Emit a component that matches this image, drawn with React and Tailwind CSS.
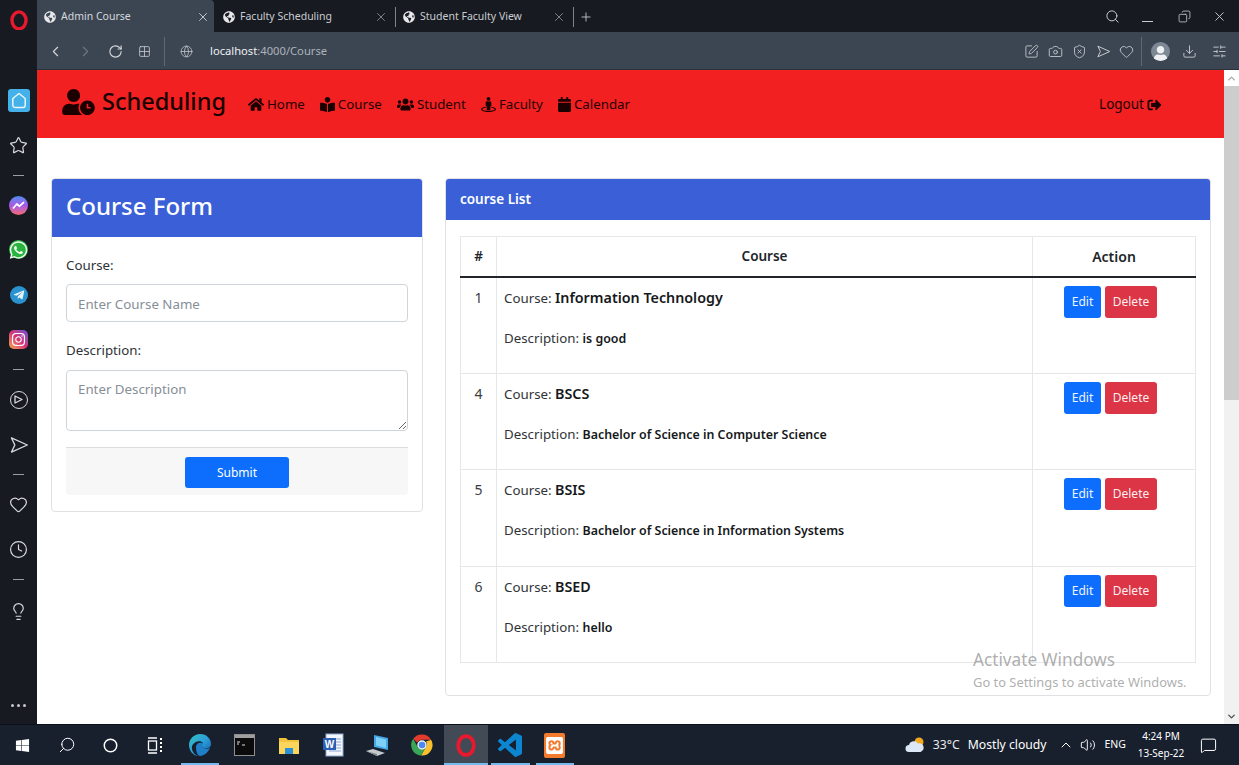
import React from 'react';
import { ChevronLeft, ChevronRight, RotateCw, Globe, Search, Copy, X, Plus, Camera, ShieldX, Heart, Download, SlidersHorizontal, Star, Clock, Lightbulb, ChevronUp, ChevronDown, Volume2, MessageSquare, Circle, SquarePen, Grid2x2 } from 'lucide-react';
import { FaHome, FaBookReader, FaUsers, FaStreetView, FaCalendar, FaSignOutAlt, FaUserClock, FaGlobeAmericas, FaWhatsapp, FaTelegramPlane, FaInstagram, FaWindows, FaUser } from 'react-icons/fa';
import { SiXampp } from 'react-icons/si';

const font = "font-['Noto_Sans',sans-serif]";

function Send2({ size = 18, className = '' }) {
  return (
    <svg width={size} height={size} viewBox="0 0 24 24" fill="none" stroke="currentColor" strokeWidth="1.6" strokeLinejoin="round" className={className}>
      <path d="M3 3.5 L22 12 L3 20.5 L7 12 Z" />
    </svg>
  );
}

function OperaLogo({ size = 20 }) {
  return (
    <svg width={size} height={size * 1.15} viewBox="0 0 24 28">
      <ellipse cx="12" cy="14" rx="9.5" ry="11.5" fill="none" stroke="#e8192c" strokeWidth="4.6" />
    </svg>
  );
}

function NavItem({ icon: Icon, label, iconClass }) {
  return (
    <a className="flex items-center gap-[3px] text-[13.3px] text-[#260304]">
      <Icon className={`${iconClass} h-[15px] text-[#1a0000]`} />
      <span>{label}</span>
    </a>
  );
}

function SideItem({ h = 'h-[45px]', children }) {
  return <div className={`flex w-full items-center justify-center ${h}`}>{children}</div>;
}

function Dash() {
  return <span className="h-px w-[11px] bg-[#9a9ea4]" />;
}

function Sidebar() {
  const ic = 'h-[19px] w-[19px] text-[#d8dadd]';
  return (
    <aside className="flex w-[37px] shrink-0 flex-col items-center bg-[#171a20]">
      <div className="flex h-[40px] items-center justify-center"><OperaLogo size={18} /></div>
      <div className="mt-[49px] flex h-[23px] w-[22px] items-center justify-center rounded-[3px] bg-[#45b1ea]">
        <svg width="16" height="17" viewBox="0 0 16 17" fill="none" stroke="#e8f6fd" strokeWidth="1.5"><path d="M8 1.5 L14.2 6.5 V13 A2.5 2.5 0 0 1 11.7 15.5 H4.3 A2.5 2.5 0 0 1 1.8 13 V6.5 Z" strokeLinejoin="round" /></svg>
      </div>
      <div className="mt-[22px] flex h-[22px] items-center"><Star className={ic} strokeWidth={1.5} /></div>
      <div className="mt-[19px] flex h-[1px] items-center"><Dash /></div>
      <SideItem h="mt-[7px] h-[44px]">
        <span className="flex h-[19px] w-[19px] items-center justify-center rounded-full bg-gradient-to-b from-[#3d8bf2] via-[#a855e8] to-[#f7656a]">
          <svg width="13" height="9" viewBox="0 0 13 9" fill="none" stroke="#fff" strokeWidth="1.8"><path d="M1 7.5 L4.8 3 L7.5 5.2 L12 1.2" strokeLinejoin="round" /></svg>
        </span>
      </SideItem>
      <SideItem><span className="flex h-[19px] w-[19px] items-center justify-center rounded-full bg-[#29b33f]"><FaWhatsapp className="h-[20px] w-[20px] text-[#f2f8f1]" /></span></SideItem>
      <SideItem><span className="flex h-[18px] w-[18px] items-center justify-center rounded-full bg-[#2a93cf]"><FaTelegramPlane className="h-[12px] w-[12px] text-[#e7f3fa]" /></span></SideItem>
      <SideItem><span className="flex h-[19px] w-[19px] items-center justify-center rounded-[5px] bg-gradient-to-tr from-[#f7a13a] via-[#d72f78] to-[#6a45d2]"><FaInstagram className="h-[15px] w-[15px] text-white" /></span></SideItem>
      <div className="mt-[7px] flex h-px items-center"><Dash /></div>
      <SideItem h="mt-[7px] h-[45px]">
        <span className="flex h-[18px] w-[18px] items-center justify-center rounded-full border-[1.5px] border-[#d8dadd]">
          <svg width="9" height="9" viewBox="0 0 9 9" fill="none" stroke="#d8dadd" strokeWidth="1.3"><path d="M1 1 L8 4.5 L1 8 Z" strokeLinejoin="round" /></svg>
        </span>
      </SideItem>
      <SideItem h="h-[45px]"><Send2 size={20} className="text-[#d8dadd]" /></SideItem>
      <div className="mt-[7px] flex h-px items-center"><Dash /></div>
      <SideItem h="mt-[7px] h-[45px]"><Heart className={ic} strokeWidth={1.5} /></SideItem>
      <SideItem h="h-[45px]"><Clock className={ic} strokeWidth={1.5} /></SideItem>
      <div className="mt-[7px] flex h-px items-center"><Dash /></div>
      <SideItem h="mt-[9px] h-[45px]"><Lightbulb className={ic} strokeWidth={1.5} /></SideItem>
      <div className="mb-[17px] mt-auto flex gap-[3px]">
        <span className="h-[3px] w-[3px] rounded-full bg-[#c8cacd]" />
        <span className="h-[3px] w-[3px] rounded-full bg-[#c8cacd]" />
        <span className="h-[3px] w-[3px] rounded-full bg-[#c8cacd]" />
      </div>
    </aside>
  );
}

function BrowserChrome() {
  const tool = 'h-[15px] w-[15px] text-[#c6cacf]';
  const tabText = 'ml-[5px] flex-1 truncate text-[10.5px]';
  return (
    <>
      <div className="flex h-[32px] items-stretch bg-[#171a20]">
        <div className="flex h-full w-[177px] items-center rounded-tr-sm bg-[#3c4653] pt-[1px]">
          <FaGlobeAmericas className="ml-[7px] h-[12px] w-[12px] shrink-0 text-[#e6e8eb]" />
          <span className={`${tabText} text-[#d5d8dc]`}>Admin Course</span>
          <X className="h-[14px] w-[14px] shrink-0 text-[#d5d8dc]" strokeWidth={1.5} />
          <span className="ml-[4px]" />
        </div>
        <div className="ml-[10px] flex h-full w-[172px] items-center pt-[1px]">
          <FaGlobeAmericas className="ml-[-1px] h-[12px] w-[12px] shrink-0 text-[#e6e8eb]" />
          <span className={`${tabText} text-[#c9ccd0]`}>Faculty Scheduling</span>
          <X className="h-[14px] w-[14px] text-[#8b9097]" strokeWidth={1.5} />
          <span className="ml-[7px] h-[20px] w-px bg-[#80858c]" />
        </div>
        <div className="flex h-full w-[197px] items-center pt-[1px]">
          <FaGlobeAmericas className="ml-[7px] h-[12px] w-[12px] shrink-0 text-[#e6e8eb]" />
          <span className={`${tabText} text-[#c9ccd0]`}>Student Faculty View</span>
          <X className="h-[14px] w-[14px] text-[#8b9097]" strokeWidth={1.5} />
          <span className="ml-[7px] h-[20px] w-px bg-[#80858c]" />
          <Plus className="ml-[5px] h-[14px] w-[14px] shrink-0 text-[#c9ccd0]" strokeWidth={1.5} />
        </div>
        <div className="ml-auto flex items-center pr-[12px] text-[#c9ccd0]">
          <Search className="h-[15px] w-[15px]" strokeWidth={1.6} />
          <span className="ml-[22px] mt-[11px] h-[1.5px] w-[11px] bg-[#c9ccd0]" />
          <Copy className="ml-[25px] h-[13px] w-[13px] -scale-x-100" strokeWidth={1.5} />
          <X className="ml-[21px] h-[15px] w-[15px]" strokeWidth={1.5} />
        </div>
      </div>
      <div className="flex h-[38px] shrink-0 items-center border-b border-[#2c323a] bg-[#3c4653] pt-[1px]">
        <ChevronLeft className="ml-[10px] h-[17px] w-[17px] text-[#d3d6da]" strokeWidth={1.6} />
        <ChevronRight className="ml-[13px] h-[17px] w-[17px] text-[#6f7680]" strokeWidth={1.6} />
        <RotateCw className="ml-[14px] h-[15px] w-[15px] text-[#d3d6da]" strokeWidth={1.8} />
        <Grid2x2 className="ml-[15px] h-[13px] w-[13px] text-[#c6cacf]" strokeWidth={1.5} />
        <span className="ml-[13px] h-[29px] w-px bg-[#5f6772]" />
        <Globe className="ml-[15px] h-[13px] w-[13px] text-[#c6cacf]" strokeWidth={1.4} />
        <span className="ml-[17px] text-[11.2px] text-[#eef0f2]">localhost<span className="text-[#aeb3ba]">:4000/Course</span></span>
        <div className="ml-auto flex items-center pr-[12px]">
          <SquarePen className={tool} strokeWidth={1.4} />
          <Camera className={`${tool} ml-[9px]`} strokeWidth={1.4} />
          <ShieldX className={`${tool} ml-[9px]`} strokeWidth={1.4} />
          <Send2 size={15} className="ml-[9px] text-[#c6cacf]" />
          <Heart className={`${tool} ml-[8px]`} strokeWidth={1.4} />
          <span className="ml-[7px] h-[29px] w-px bg-[#5f6772]" />
          <span className="ml-[9px] flex h-[19px] w-[19px] items-end justify-center overflow-hidden rounded-full bg-[#7d8894]"><FaUser className="h-[15px] w-[15px] text-[#eef0f2]" /></span>
          <Download className={`${tool} ml-[12px]`} strokeWidth={1.5} />
          <SlidersHorizontal className={`${tool} ml-[15px]`} strokeWidth={1.5} />
        </div>
      </div>
    </>
  );
}

function Navbar() {
  return (
    <nav className="flex h-[68px] shrink-0 items-center bg-[#f22020] pl-[25px] pr-[62px] pt-[1px] text-[#260304]">
      <FaUserClock className="h-[26px] w-[33px] -translate-y-[3px] text-[#1c0000]" />
      <span className="ml-[7px] -translate-y-[3px] text-[23.5px] font-medium leading-none text-[#170000]">Scheduling</span>
      <div className="ml-[22px] flex items-center gap-[15px]">
        <NavItem icon={FaHome} label="Home" iconClass="w-[16px]" />
        <NavItem icon={FaBookReader} label="Course" iconClass="w-[15px]" />
        <NavItem icon={FaUsers} label="Student" iconClass="w-[17px]" />
        <NavItem icon={FaStreetView} label="Faculty" iconClass="w-[15px]" />
        <NavItem icon={FaCalendar} label="Calendar" iconClass="w-[13px]" />
      </div>
      <a className="ml-auto flex items-center text-[13.5px]">Logout<FaSignOutAlt className="ml-[3px] h-[14px] w-[15px] text-[#1a0000]" /></a>
    </nav>
  );
}

function CourseForm() {
  return (
    <section className="h-[334px] w-[372px] shrink-0 overflow-hidden rounded-[4px] border border-[#dfe1e5] bg-white">
      <header className="flex h-[58px] items-center bg-[#3a5fd6] px-[14px] pb-[4px] text-[24px] font-medium text-white">Course Form</header>
      <div className="px-[14px] pt-[17px]">
        <label className="block text-[13.3px] leading-[22px] text-[#2f3337]">Course:</label>
        <input placeholder="Enter Course Name" className="mt-[8px] block h-[38px] w-full rounded-[4px] border border-[#ced4da] px-[11px] pt-[2px] text-[13.3px] placeholder:text-[#868e96]" />
        <label className="mt-[17px] block text-[13.3px] leading-[22px] text-[#2f3337]">Description:</label>
        <textarea placeholder="Enter Description" className="mt-[9px] block h-[61px] w-full rounded-[4px] border border-[#ced4da] px-[11px] pb-[7px] pt-[9px] text-[13.3px] placeholder:text-[#868e96]" />
        <div className="mt-[16px] flex h-[48px] items-center justify-center rounded-b-[4px] border-t border-[#dcdcdc] bg-[#f7f7f7] pt-[1px]">
          <button className="h-[31px] w-[104px] rounded-[3px] bg-[#0d6efd] pt-[1px] text-[12px] text-white">Submit</button>
        </div>
      </div>
    </section>
  );
}

const rows = [
  { id: 1, course: 'Information Technology', desc: 'is good' },
  { id: 4, course: 'BSCS', desc: 'Bachelor of Science in Computer Science' },
  { id: 5, course: 'BSIS', desc: 'Bachelor of Science in Information Systems' },
  { id: 6, course: 'BSED', desc: 'hello' },
];

function CourseList() {
  return (
    <section className="h-[518px] w-[766px] shrink-0 overflow-hidden rounded-[4px] border border-[#dfe1e5] bg-white">
      <header className="flex h-[41px] items-center bg-[#3a5fd6] px-[14px] text-[13.5px] font-semibold text-white">course List</header>
      <div className="px-[14px] pt-[16px]">
        <table className="w-full table-fixed border-collapse border border-[#e6e7ea]">
          <thead>
            <tr className="h-[40px] border-b-2 border-[#212529] text-[13.5px] font-semibold text-[#212529]">
              <th className="w-[36px] border-x border-[#e6e7ea] font-semibold">#</th>
              <th className="w-[536px] border-x border-[#e6e7ea] font-semibold">Course</th>
              <th className="border-x border-[#e6e7ea] text-[14px] font-semibold">Action</th>
            </tr>
          </thead>
          <tbody>
            {rows.map((r) => (
              <tr key={r.id} className="h-[96.5px] border-b border-[#e6e7ea] align-top">
                <td className="border-x border-[#e6e7ea] pt-[9px] text-center text-[14px] text-[#3a3e42]">{r.id}</td>
                <td className="border-x border-[#e6e7ea] px-[7px] pt-[9px] text-[#2f3337]">
                  <p className="text-[13.3px] leading-[22px]">Course: <b className="text-[14.3px] font-semibold text-[#16181a]">{r.course}</b></p>
                  <p className="mt-[18px] text-[13.3px] leading-[22px]">Description: <b className="text-[12.4px] font-semibold text-[#16181a]">{r.desc}</b></p>
                </td>
                <td className="border-x border-[#e6e7ea] pl-[31px] pt-[8px]">
                  <div className="flex gap-[4px]">
                    <button className="h-[32px] w-[37px] rounded-[3px] bg-[#0d6efd] text-[12px] text-[#eef5ff]">Edit</button>
                    <button className="h-[32px] w-[52px] rounded-[3px] bg-[#dc3545] text-[12px] text-[#fbeef0]">Delete</button>
                  </div>
                </td>
              </tr>
            ))}
          </tbody>
        </table>
      </div>
    </section>
  );
}

function Scrollbar() {
  return (
    <div className="flex w-[15px] shrink-0 flex-col bg-[#f1f1f1]">
      <div className="flex h-[16px] items-center justify-center bg-white"><ChevronUp className="h-[11px] w-[11px] text-[#a8a8a8]" strokeWidth={3} /></div>
      <div className="h-[314px] bg-[#cdcdcd]" />
      <div className="mt-auto flex h-[16px] items-center justify-center"><ChevronDown className="h-[11px] w-[11px] text-[#505050]" strokeWidth={3} /></div>
    </div>
  );
}

function Slot({ children, active, bar }) {
  return (
    <div className={`relative flex h-full w-[44.4px] items-center justify-center ${active ? 'bg-[#424a56]' : ''}`}>
      {children}
      {bar && <span className="absolute bottom-0 left-[3px] right-[3px] h-[2px] bg-[#76b9ed]" />}
      {active && <span className="absolute bottom-0 left-0 right-0 h-[2px] bg-[#76b9ed]" />}
    </div>
  );
}

function Taskbar() {
  return (
    <footer className="flex h-[41px] shrink-0 items-center border-t border-[#0c1018] bg-[#18202e] text-white">
      <Slot><FaWindows className="h-[15px] w-[15px]" /></Slot>
      <Slot><Search className="h-[18px] w-[18px] -scale-x-100" strokeWidth={1.3} /></Slot>
      <Slot><Circle className="h-[15px] w-[15px]" strokeWidth={2.4} /></Slot>
      <Slot>
        <svg width="16" height="17" viewBox="0 0 16 17" fill="none" stroke="#fff" strokeWidth="1.3"><path d="M1 1 H10 M1 16 H10" /><rect x="1.5" y="4" width="8" height="9" /><path d="M13 2 H15 M13 6 H15 M13 10 H15 M13 14 H15" strokeWidth="2" /></svg>
      </Slot>
      <Slot bar>
        <svg width="24" height="24" viewBox="0 0 24 24"><defs><linearGradient id="ed" x1="0" y1="0" x2="1" y2="1"><stop offset="0" stopColor="#35c1c1" /><stop offset="0.5" stopColor="#2b9fd9" /><stop offset="1" stopColor="#0d5aa7" /></linearGradient></defs><path d="M12 1 C19 1 23 6 23 11 C23 15 19 16 16 15 C13 14 14 11 15 10 C13 7 6 8 4 13 C3 18 7 23 12 23 C6 24 1 18 1 12 C1 6 6 1 12 1Z" fill="url(#ed)" /><path d="M8 14 C8 10 12 9 15 10 C14 11 13 14 16 15 C18 16 20 16 22 15 C20 20 15 23 12 23 C9 22 8 18 8 14Z" fill="#1f7fc9" /></svg>
      </Slot>
      <Slot>
        <svg width="21" height="22" viewBox="0 0 21 22"><rect x="0.5" y="0.5" width="20" height="21" fill="#0b0b0b" stroke="#8f8f8f" /><rect x="1" y="1" width="19" height="3" fill="#9f9f9f" /><path d="M3 8 H6 M3 10 H5 M8 11 H11" stroke="#e0e0e0" strokeWidth="1.2" /></svg>
      </Slot>
      <Slot>
        <svg width="20" height="20" viewBox="0 0 20 20"><path d="M0 3 H7 L9 5 H20 V19 H0 Z" fill="#f3c33e" /><rect x="0" y="7" width="20" height="12" fill="#fbd55c" /><rect x="6" y="13" width="8" height="6" fill="#2d8fd6" /></svg>
      </Slot>
      <Slot>
        <svg width="22" height="24" viewBox="0 0 22 24"><rect x="4" y="1" width="17" height="22" fill="#f4f7fc" stroke="#8ea8d4" /><path d="M12 6 H19 M12 9 H19 M12 12 H19 M12 15 H19 M7 18 H19" stroke="#8ca6d6" /><rect x="1" y="5" width="13" height="12" fill="#2b5fb3" /><text x="7.5" y="15" fontSize="10" fontWeight="700" textAnchor="middle" fill="#fff" fontFamily="Liberation Sans, sans-serif">W</text></svg>
      </Slot>
      <Slot>
        <svg width="24" height="24" viewBox="0 0 24 24"><path d="M9 2 L23 5 V17 L9 14 Z" fill="#43a6e6" /><path d="M11 4 L21 6.5 V15 L11 12.5 Z" fill="#7fd0f7" /><path d="M1 18 L8 16 L20 20 L12 23 Z" fill="#c6cace" /><path d="M1 18 L12 23 V21 Z" fill="#7f8489" /></svg>
      </Slot>
      <Slot>
        <svg width="24" height="24" viewBox="0 0 24 24"><path d="M12 1.5 A10.5 10.5 0 0 1 21.1 6.75 H12 A5.25 5.25 0 0 0 7.3 9.7 L3.2 5.8 A10.5 10.5 0 0 1 12 1.5Z" fill="#e33b2e" /><path d="M21.1 6.75 A10.5 10.5 0 0 1 11 22.45 L15.5 14.8 A5.25 5.25 0 0 0 16 8.5 Z" fill="#fbc02d" /><path d="M3.2 5.8 L8 14.8 A5.25 5.25 0 0 0 15.5 14.8 L11 22.45 A10.5 10.5 0 0 1 3.2 5.8Z" fill="#3aa757" /><circle cx="12" cy="12" r="4" fill="#4a89f3" stroke="#f2f2f2" strokeWidth="1.5" /></svg>
      </Slot>
      <Slot active><OperaLogo size={20} /></Slot>
      <Slot bar>
        <svg width="24" height="24" viewBox="0 0 24 24" fill="#0d86d2"><path d="M23.15 2.587L18.21.21a1.494 1.494 0 0 0-1.705.29l-9.46 8.63-4.12-3.128a.999.999 0 0 0-1.276.057L.327 7.261A1 1 0 0 0 .326 8.74L3.899 12 .326 15.26a1 1 0 0 0 .001 1.479L1.65 17.94a.999.999 0 0 0 1.276.057l4.12-3.128 9.46 8.63a1.492 1.492 0 0 0 1.704.29l4.942-2.377A1.5 1.5 0 0 0 24 20.06V3.939a1.5 1.5 0 0 0-.85-1.352zm-5.146 14.861L10.826 12l7.178-5.448v10.896z" /></svg>
      </Slot>
      <Slot bar>
        <span className="flex h-[25px] w-[21px] items-center justify-center rounded-[2px] bg-[#f37b2d]"><SiXampp className="h-[17px] w-[17px] text-white" /></span>
      </Slot>
      <div className="ml-auto flex h-full items-center">
        <svg width="20" height="16" viewBox="0 0 20 16"><circle cx="14" cy="5" r="4.5" fill="#f4a91f" /><path d="M4 15 A3.5 3.5 0 0 1 4 8 A5 5 0 0 1 13 6.5 A4.2 4.2 0 0 1 15.5 15 Z" fill="#dce8f5" /></svg>
        <span className="ml-[8px] whitespace-nowrap text-[12.2px] text-[#e8eaed]">33°C</span>
        <span className="ml-[8px] whitespace-nowrap text-[12.2px] text-white">Mostly cloudy</span>
        <ChevronUp className="ml-[11px] h-[16px] w-[16px]" strokeWidth={1.5} />
        <Volume2 className="ml-[6px] h-[16px] w-[16px]" strokeWidth={1.4} />
        <span className="ml-[9px] whitespace-nowrap text-[10.5px]">ENG</span>
        <div className="ml-[10px] flex w-[50px] flex-col items-center whitespace-nowrap text-[10px] leading-[17px]">
          <span>4:24 PM</span>
          <span>13-Sep-22</span>
        </div>
        <MessageSquare className="ml-[14px] mr-[22px] h-[17px] w-[17px]" strokeWidth={1.4} />
      </div>
    </footer>
  );
}

export default function App() {
  return (
    <div className={`${font} relative flex h-[765px] w-[1239px] flex-col overflow-hidden bg-white`}>
      <div className="flex min-h-0 flex-1">
        <Sidebar />
        <div className="flex min-w-0 flex-1 flex-col">
          <BrowserChrome />
          <div className="flex min-h-0 flex-1">
            <main className="min-w-0 flex-1 bg-white">
              <Navbar />
              <div className="flex items-start gap-[22px] pl-[14px] pt-[40px]">
                <CourseForm />
                <CourseList />
              </div>
            </main>
            <Scrollbar />
          </div>
        </div>
      </div>
      <Taskbar />
      <div className="pointer-events-none absolute left-[973px] top-[649px] text-[#9a9a9a]/80">
        <div className="text-[17.2px] leading-[22px]">Activate Windows</div>
        <div className="mt-[1px] text-[12.9px] leading-[20px]">Go to Settings to activate Windows.</div>
      </div>
    </div>
  );
}
